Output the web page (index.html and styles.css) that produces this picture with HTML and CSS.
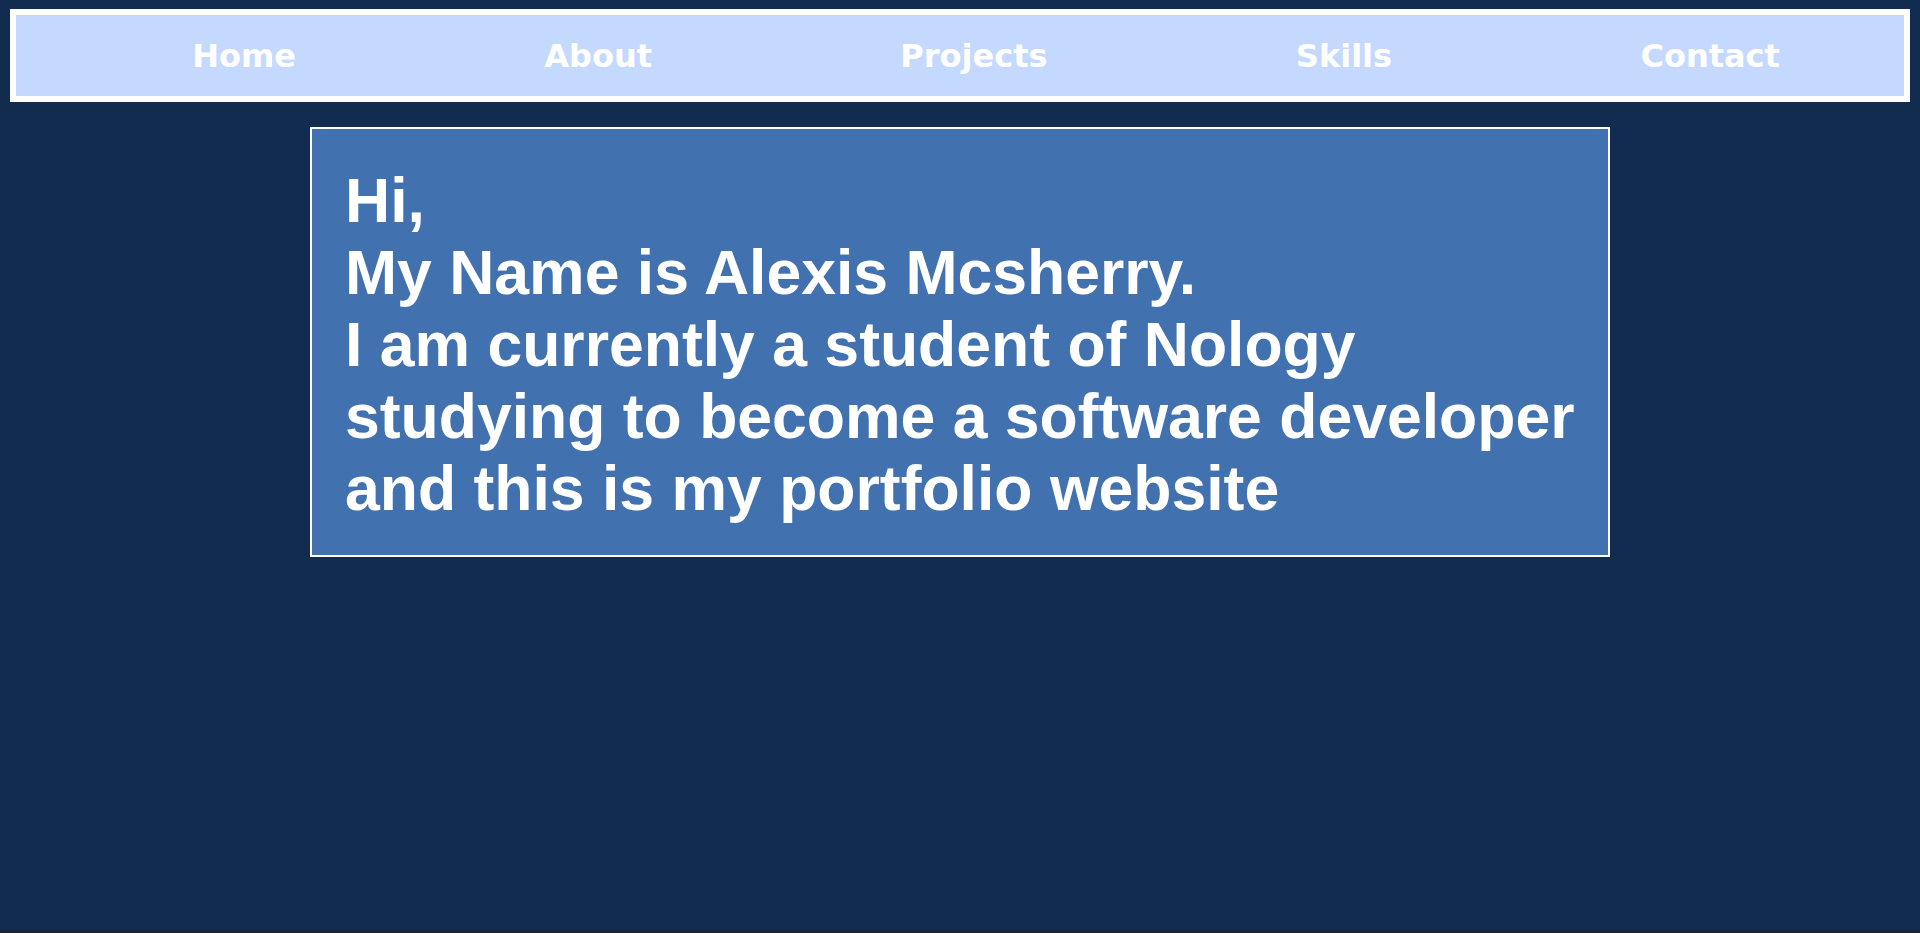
FILE: index.html
```html
<!DOCTYPE html>
<html lang="en">
<head>
<meta charset="utf-8">
<title>Alexis Mcsherry - Portfolio</title>
<link rel="stylesheet" href="styles.css">
</head>
<body>
<div class="page">
  <nav class="nav">
    <ul class="nav-list">
      <li><a class="nav-link" href="#home">Home</a></li>
      <li><a class="nav-link" href="#about">About</a></li>
      <li><a class="nav-link" href="#projects">Projects</a></li>
      <li><a class="nav-link" href="#skills">Skills</a></li>
      <li><a class="nav-link" href="#contact">Contact</a></li>
    </ul>
  </nav>
  <section class="intro">
    <h1 class="intro-text">Hi,<br>My Name is Alexis Mcsherry.<br>I am currently a student of Nology<br>studying to become a software developer<br>and this is my portfolio website</h1>
  </section>
</div>
</body>
</html>
```

FILE: styles.css
```css
html {
  background: #1b2531;
}
body {
  margin: 0;
  height: 930px;
  background: #112c4e;
}
.page {
  padding: 9px 10px 0 10px;
  display: flex;
  flex-direction: column;
  align-items: center;
}
.nav {
  align-self: stretch;
  height: 81px;
  border: 6px solid #ffffff;
  background: #c5d9ff;
}
.nav-list {
  list-style: none;
  margin: 0;
  padding: 0 0 0 52px;
  height: 100%;
  display: flex;
  justify-content: space-around;
  align-items: center;
}
.nav-link {
  font-family: "DejaVu Sans", Verdana, sans-serif;
  font-weight: bold;
  font-size: 32px;
  color: #ffffff;
  text-decoration: none;
  display: block;
  line-height: 38px;
}
.intro {
  margin-top: 25px;
  width: 1300px;
  border: 2px solid #ffffff;
  background: #4172af;
  padding: 35px 32px 30px 33px;
  box-sizing: border-box;
  height: 430px;
}
.intro-text {
  margin: 0;
  font-family: "Liberation Sans", Arial, sans-serif;
  font-weight: bold;
  font-size: 62.5px;
  line-height: 72px;
  color: #ffffff;
}
```
